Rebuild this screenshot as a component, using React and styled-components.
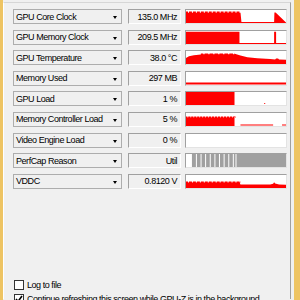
import React from 'react';
import styled, { createGlobalStyle } from 'styled-components';

const GlobalStyle = createGlobalStyle`
  html, body {
    margin: 0;
    padding: 0;
    width: 300px;
    height: 300px;
    overflow: hidden;
    background: #f0f0f0;
  }
  body {
    font-family: "Liberation Sans", Arial, sans-serif;
    font-size: 9px;
    letter-spacing: -0.45px;
    color: #000;
  }
`;

const Window = styled.div`
  width: 300px;
  height: 300px;
  box-sizing: border-box;
  border-left: 3px solid #eec463;
  border-right: 6px solid #eec463;
  background: #f0f0f0;
  overflow: hidden;
`;

const TabPage = styled.div`
  margin-top: 2px;
  margin-right: 3px;
  border-top: 1px solid #d6d6d6;
  border-left: 1px solid #ffffff;
  border-right: 1px solid #a0a0a0;
  height: 297px;
  box-sizing: border-box;
  padding: 6px 0 0 9px;
`;

const Sensors = styled.div`
  display: flex;
  flex-direction: column;
  gap: 5.6px;
`;

const Row = styled.div`
  display: flex;
  height: 15px;
`;

const Combo = styled.div`
  width: 109px;
  box-sizing: border-box;
  border: 1px solid #adadad;
  background: #f0f0f0;
  display: flex;
  align-items: center;
  padding: 0 0 0 2px;
  position: relative;
  white-space: nowrap;
`;

const Arrow = styled.span`
  position: absolute;
  right: 4px;
  top: 6px;
  width: 0;
  height: 0;
  border-left: 2.5px solid transparent;
  border-right: 2.5px solid transparent;
  border-top: 3px solid #000;
`;

const Value = styled.div`
  width: 53px;
  margin-left: 6px;
  box-sizing: border-box;
  border: 1px solid;
  border-color: #a0a0a0 #ffffff #ffffff #a0a0a0;
  background: #f0f0f0;
  display: flex;
  align-items: center;
  justify-content: flex-end;
  padding-right: 3px;
  white-space: nowrap;
`;

const Graph = styled.div`
  width: 102px;
  margin-left: 4px;
  box-sizing: border-box;
  border: 1px solid;
  border-color: #a0a0a0 #e3e3e3 #e3e3e3 #a0a0a0;
  background: #ffffff;
  svg { display: block; }
`;

const Footer = styled.div`
  margin-top: 91px;
  padding-left: 1px;
  display: flex;
  flex-direction: column;
  gap: 4px;
`;

const CheckRow = styled.label`
  display: flex;
  align-items: center;
  gap: 3px;
  height: 10px;
  white-space: nowrap;
`;

const Box = styled.span`
  width: 10px;
  height: 10px;
  flex: none;
  box-sizing: border-box;
  border: 1px solid #333;
  background: #fff;
  display: flex;
  align-items: center;
  justify-content: center;
`;

const RED = '#ff0000';

function teeth(x0, x1, hi, lo, step) {
  const pts = [];
  for (let x = x0; x < x1; x += step) {
    pts.push([x, hi], [x + step * 0.5, hi], [x + step * 0.5, lo], [x + step * 0.75, lo], [x + step * 0.75, hi]);
  }
  return pts;
}

const poly = (pts) => pts.map((p) => p.join(',')).join(' ');

const graphs = {
  core: [
    { fill: RED, pts: [[0, 13], [0, 2], ...teeth(0, 55, 1.6, 2.8, 4), [55, 2.2], [56, 12], [89, 12], [89.3, 2.4], [90.5, 2.4], [101, 12.5], [101, 13]] },
  ],
  mem: [
    { fill: RED, pts: [[0, 13], [0, 0.8], [54, 0.8], [54, 12], [89, 12], [89, 0.8], [91, 0.8], [91, 12], [101, 12], [101, 13]] },
  ],
  temp: [
    { fill: RED, pts: [[0, 13], [0, 7], [3, 5.2], [8, 4.2], [15, 3.6], ...teeth(15, 48, 2.6, 3.3, 5), [50, 3], [55, 4.5], [62, 6.2], [72, 7.2], [85, 8], [90, 8.4], [91, 7.6], [93, 7.6], [94, 8.5], [101, 8.8], [101, 13]] },
  ],
  used: [
    { fill: RED, pts: [[0, 10.5], [101, 10.5], [101, 12.5], [0, 12.5]] },
  ],
  load: [
    { fill: RED, pts: [[0, 13], [0, 0], [49, 0], [49, 13]] },
    { fill: RED, pts: [[79, 11], [80, 11], [80, 12], [79, 12]] },
  ],
  mcl: [
    { fill: RED, pts: [[0, 13], [0, 4.5], ...teeth(0, 49, 3.6, 4.6, 3), [49, 4], [49, 13]] },
    { fill: RED, pts: [[55, 11.5], [88, 11.5], [88, 12.5], [55, 12.5]] },
    { fill: RED, pts: [[97, 11.5], [101, 11.5], [101, 12.5], [97, 12.5]] },
  ],
  video: [],
  perf: [
    { fill: '#a0a0a0', pts: [[6, 0], [101, 0], [101, 13], [6, 13]] },
  ],
  vddc: [
    { fill: RED, pts: [[0, 13], [0, 7], ...teeth(0, 54, 6.4, 7.4, 4), [54, 7], [55, 9.5], [85, 9.5], [88, 8.8], [89, 7.2], [90, 8.6], [94, 9.6], [101, 9.8], [101, 13]] },
  ],
};

const perfStripes = [10, 14.7, 19.3, 24, 28.7, 33.3, 38, 42.7, 47.3, 50];

function SensorGraph({ kind }) {
  return (
    <Graph>
      <svg width="100" height="13" viewBox="0 0 101 13" preserveAspectRatio="none">
        {graphs[kind].map((g, i) => (
          <polygon key={i} points={poly(g.pts)} fill={g.fill} />
        ))}
        {kind === 'perf' &&
          perfStripes.map((x) => <rect key={x} x={x} y="0" width="1" height="13" fill="#fff" />)}
      </svg>
    </Graph>
  );
}

const sensors = [
  { name: 'GPU Core Clock', value: '135.0 MHz', kind: 'core' },
  { name: 'GPU Memory Clock', value: '209.5 MHz', kind: 'mem' },
  { name: 'GPU Temperature', value: '38.0 °C', kind: 'temp' },
  { name: 'Memory Used', value: '297 MB', kind: 'used' },
  { name: 'GPU Load', value: '1 %', kind: 'load' },
  { name: 'Memory Controller Load', value: '5 %', kind: 'mcl' },
  { name: 'Video Engine Load', value: '0 %', kind: 'video' },
  { name: 'PerfCap Reason', value: 'Util', kind: 'perf' },
  { name: 'VDDC', value: '0.8120 V', kind: 'vddc' },
];

function Check({ checked, children }) {
  return (
    <CheckRow>
      <Box>
        {checked && (
          <svg width="8" height="8" viewBox="0 0 8 8">
            <path d="M1 4 L3 6.5 L7 1" stroke="#000" strokeWidth="1.6" fill="none" />
          </svg>
        )}
      </Box>
      {children}
    </CheckRow>
  );
}

export default function App() {
  return (
    <>
      <GlobalStyle />
      <Window>
        <TabPage>
          <Sensors>
            {sensors.map((s) => (
              <Row key={s.name}>
                <Combo>
                  {s.name}
                  <Arrow />
                </Combo>
                <Value>{s.value}</Value>
                <SensorGraph kind={s.kind} />
              </Row>
            ))}
          </Sensors>
          <Footer>
            <Check>Log to file</Check>
            <Check checked>Continue refreshing this screen while GPU-Z is in the background</Check>
          </Footer>
        </TabPage>
      </Window>
    </>
  );
}
